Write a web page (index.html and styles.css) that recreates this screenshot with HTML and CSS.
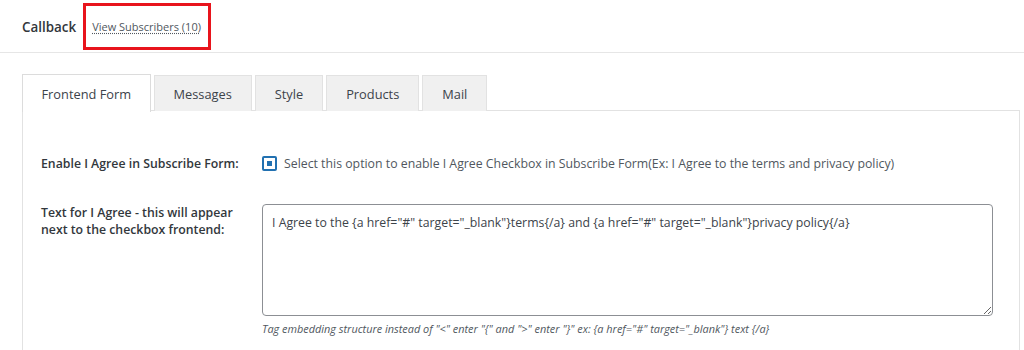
FILE: index.html
```html
<!DOCTYPE html>
<html lang="en">
    <head>
        <meta charset="UTF-8">
        <meta name="viewport" content="width=device-width, initial-scale=1.0">
        <title>Callback</title>
        <link rel="stylesheet" href="styles.css">
    </head>
    <body>
        <div class="page-head">
            <h2 class="page-title">Callback</h2>
            <span class="highlight">
                <a href="#" class="subs-link">View Subscribers (10)</a>
            </span>
        </div>

        <div class="content">
            <div class="tabs">
                <a href="#" class="tab tab-active">Frontend Form</a>
                <a href="#" class="tab">Messages</a>
                <a href="#" class="tab">Style</a>
                <a href="#" class="tab">Products</a>
                <a href="#" class="tab">Mail</a>
            </div>

            <div class="panel">
                <div class="form-row row-check">
                    <div class="form-label">Enable I Agree in Subscribe Form:</div>
                    <div class="form-field">
                        <label class="check-label">
                            <span class="checkbox"><span class="checkbox-dot"></span></span>
                            Select this option to enable I Agree Checkbox in Subscribe Form(Ex: I Agree to the terms and privacy policy)
                        </label>
                    </div>
                </div>

                <div class="form-row">
                    <div class="form-label">Text for I Agree - this will appear next to the checkbox frontend:</div>
                    <div class="form-field">
                        <textarea class="agree-text">I Agree to the {a href="#" target="_blank"}terms{/a} and {a href="#" target="_blank"}privacy policy{/a}</textarea>
                        <p class="help">Tag embedding structure instead of "&lt;" enter "{" and "&gt;" enter "}" ex: {a href="#" target="_blank"} text {/a}</p>
                    </div>
                </div>
            </div>
        </div>
    </body>
</html>
```

FILE: styles.css
```css
body {
    margin: 0;
    font-family: "Open Sans", "Noto Sans", sans-serif;
    font-size: 12.3px;
    color: #3c434a;
    background: #fff;
    overflow: hidden;
}
.page-head {
    display: flex;
    align-items: center;
    height: 52px;
    padding: 0 22px;
    border-bottom: 1px solid #e6e6e6;
}
.page-title {
    margin: 2px 7px 0 0;
    font-size: 13.4px;
    font-weight: 600;
    color: #32373c;
}
.highlight {
    box-sizing: border-box;
    display: flex;
    align-items: center;
    height: 47px;
    width: 128px;
    padding: 0 6px;
    border: 3px solid #e8141c;
}
.subs-link {
    font-size: 11px;
    color: #50575e;
    text-decoration: underline dotted;
    text-underline-offset: 2px;
}
.content {
    padding: 21px 4px 0 22px;
}
.tabs {
    display: flex;
    gap: 3px;
    height: 37px;
}
.tab {
    display: flex;
    align-items: center;
    padding: 0 19px;
    font-size: 12.8px;
    color: #3c434a;
    text-decoration: none;
    background: #f0f0f0;
    border: 1px solid #e2e2e2;
    border-bottom: none;
    margin-top: 1px;
}
.tab-active {
    background: #fff;
    margin-top: 0;
    position: relative;
    z-index: 1;
    height: 37px;
    padding: 0 18.5px;
    border-color: #dcdcdc;
}
.panel {
    box-sizing: border-box;
    border: 1px solid #e2e2e2;
    border-bottom: none;
    margin-top: -1px;
    padding: 34px 0 0 18px;
    height: 240px;
}
.form-row {
    display: flex;
}
.row-check {
    align-items: center;
    height: 36px;
    margin-bottom: 22px;
}
.form-label {
    width: 204px;
    flex-shrink: 0;
    padding-right: 17px;
    font-weight: 600;
    line-height: 17px;
    color: #32373c;
}
.form-row + .form-row .form-label {
    padding-top: 1px;
}
.form-field {
    flex: 1;
    padding-right: 26px;
}
.check-label {
    display: flex;
    align-items: center;
    gap: 7px;
    color: #50575e;
}
.checkbox {
    display: flex;
    align-items: center;
    justify-content: center;
    width: 11px;
    height: 11px;
    border: 2px solid #2271b1;
    border-radius: 2px;
}
.checkbox-dot {
    width: 5px;
    height: 5px;
    background: #2271b1;
}
.agree-text {
    display: block;
    box-sizing: border-box;
    width: 100%;
    height: 112px;
    margin: 1px 0 0 0;
    padding: 9px 9px;
    font-family: inherit;
    font-size: 12.3px;
    color: #3c434a;
    border: 1px solid #8c8f94;
    border-radius: 4px;
    resize: vertical;
}
.help {
    margin: 5px 0 0;
    font-size: 10.9px;
    font-style: italic;
    color: #50575e;
}
```
